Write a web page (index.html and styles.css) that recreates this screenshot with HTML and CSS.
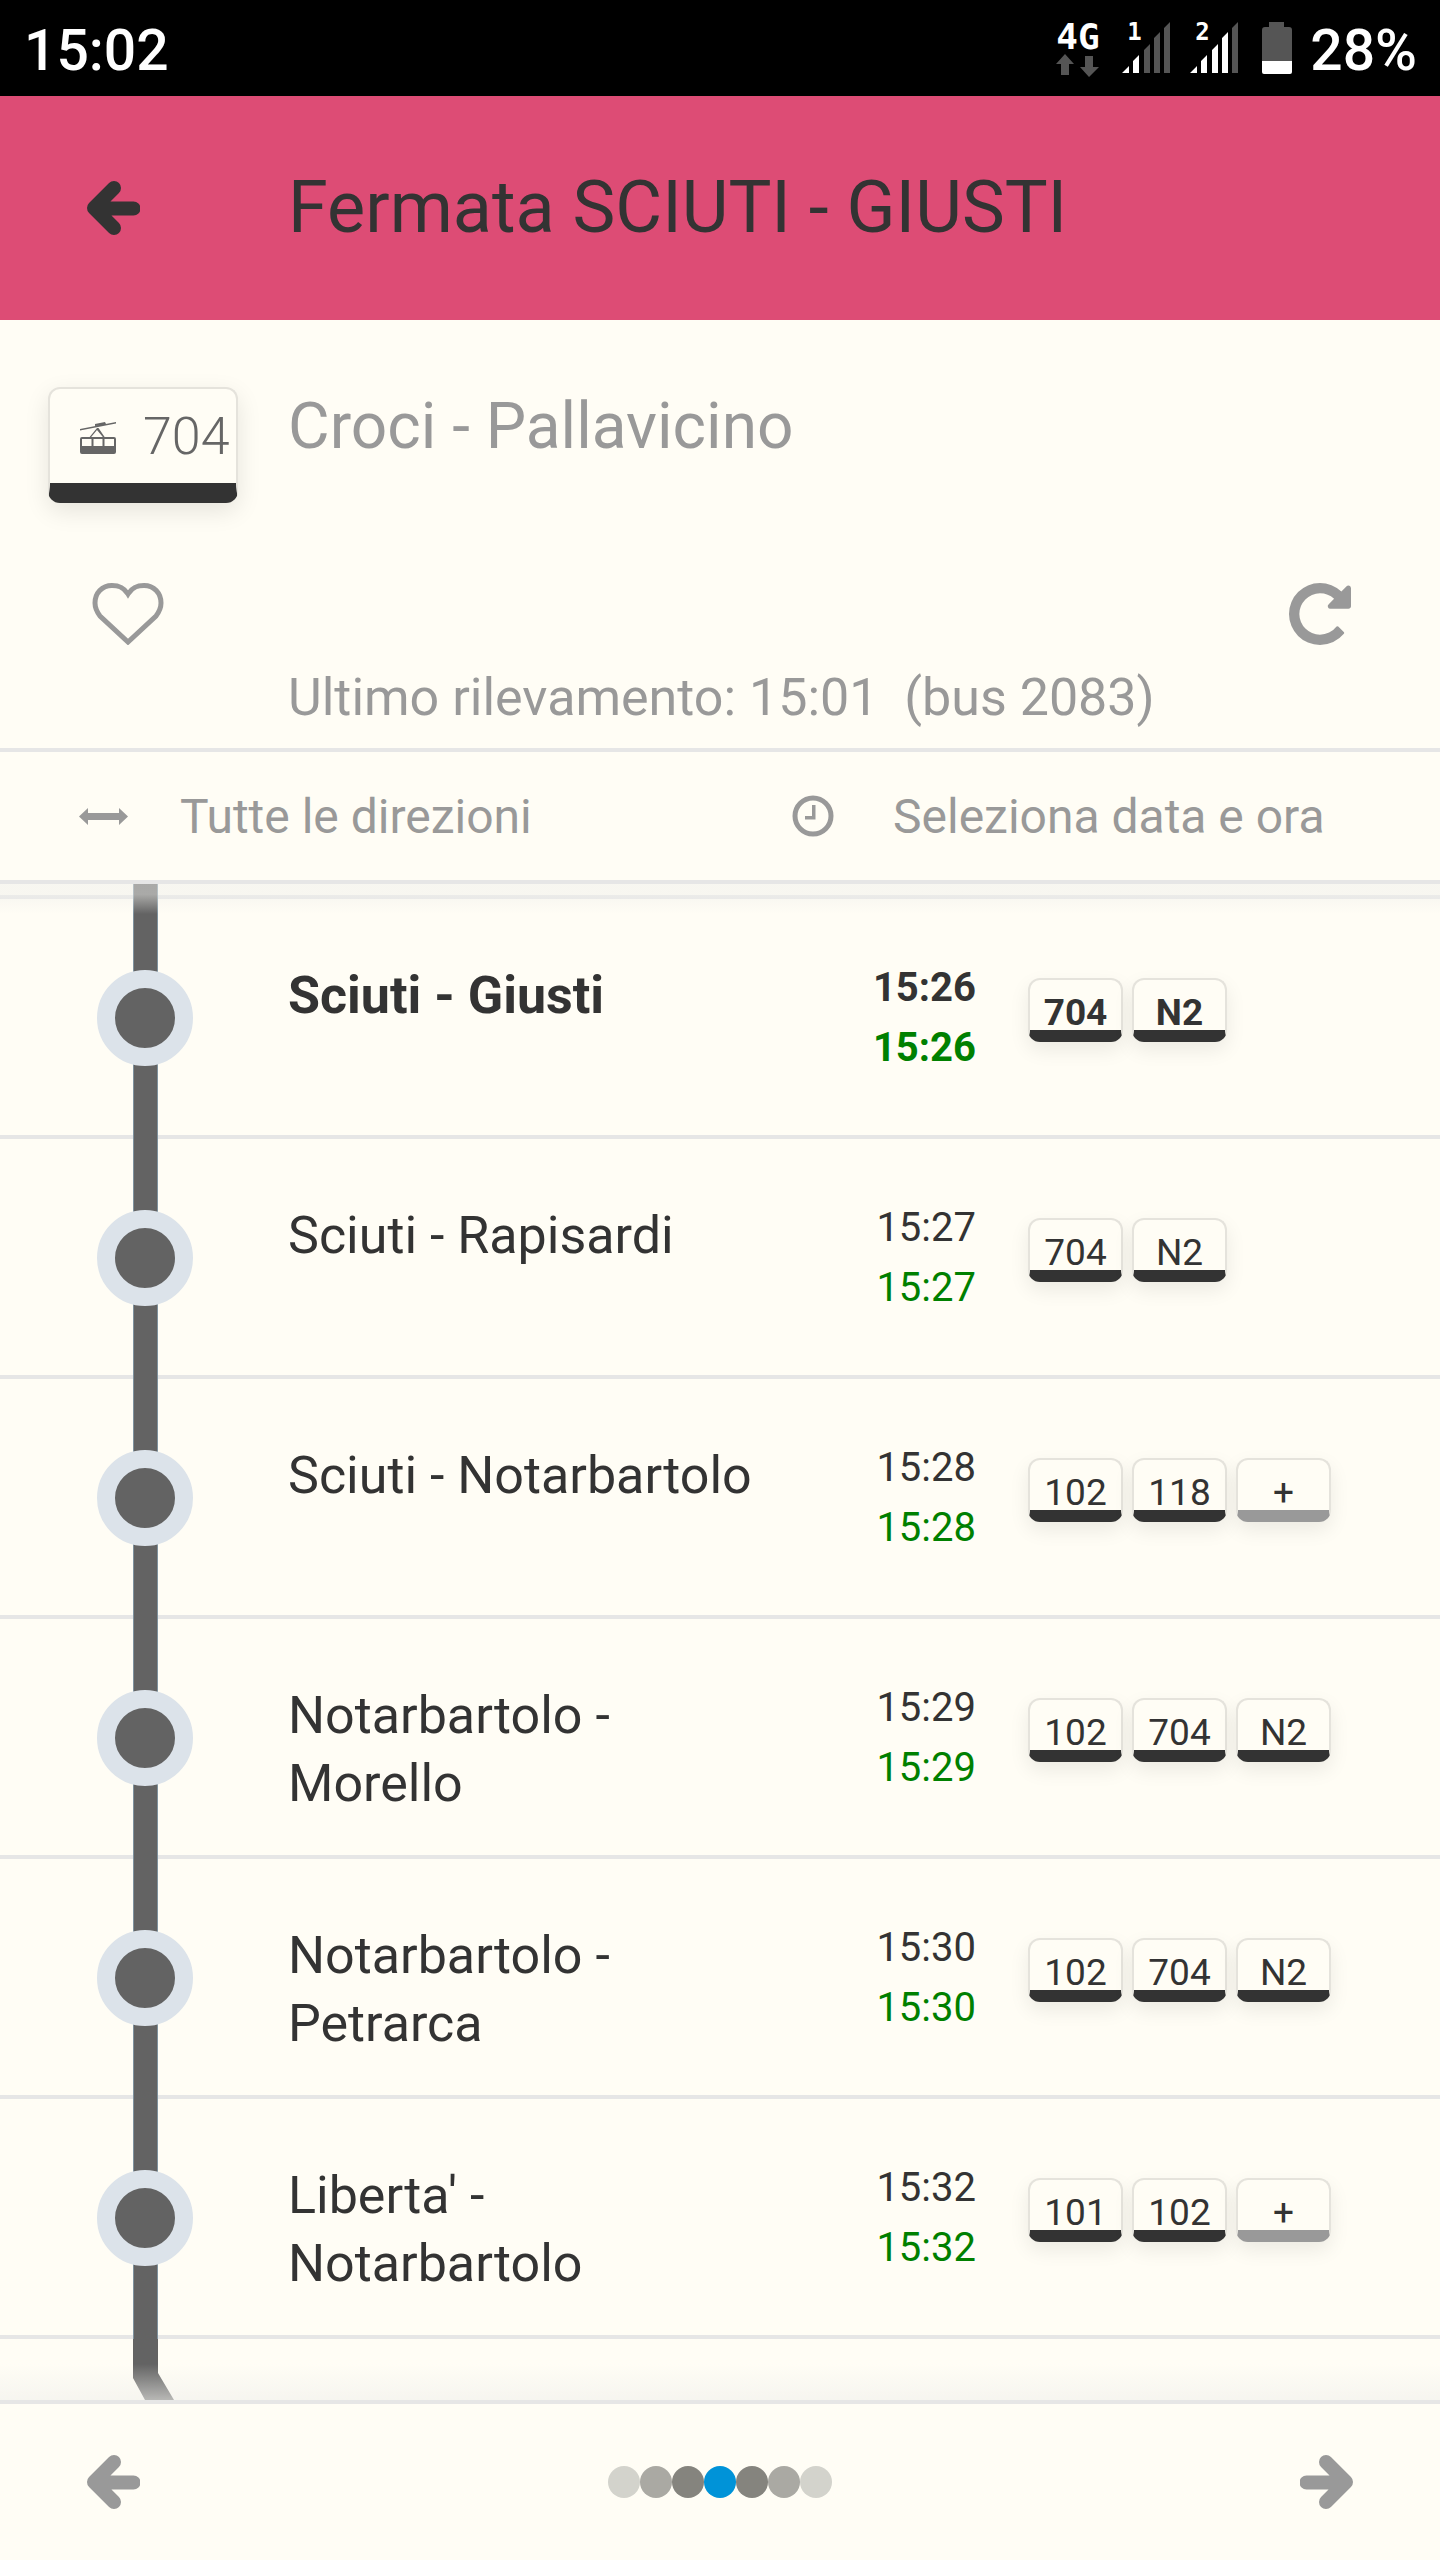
FILE: index.html
```html
<!DOCTYPE html>
<html lang="it">
<head>
    <meta charset="UTF-8">
    <meta name="viewport" content="width=device-width, initial-scale=1.0">
    <title>Fermata SCIUTI - GIUSTI</title>
    <link rel="stylesheet" href="styles.css">
</head>
<body>
<div class="app">
    <div class="statusbar">
        <span class="clock">15:02</span>
        <div class="status-icons">
            <div class="net">
                <span class="net-label">4G</span>
                <svg class="net-arrows" width="43" height="24" viewBox="0 0 43 24"><path d="M9 0l9 10h-5v11H5V10H0zM29 2h8v11h6l-10 10-9-10h5z" fill="#555"/></svg>
            </div>
            <div class="sim">
                <span class="sim-num">1</span>
                <svg width="48" height="51" viewBox="0 0 48 51"><path d="M0 51l7-7v7zM11 51V39l6-6v18z" fill="#fff"/><path d="M22 51V28l6-6v29zM32 51V16l6-6v41zM42 51V6l6-6v51z" fill="#555"/></svg>
            </div>
            <div class="sim sim-last">
                <span class="sim-num">2</span>
                <svg width="48" height="51" viewBox="0 0 48 51"><path d="M0 51l7-7v7zM11 51V39l6-6v18zM22 51V28l6-6v29zM32 51V16l6-6v41z" fill="#fff"/><path d="M42 51V6l6-6v51z" fill="#555"/></svg>
            </div>
            <svg class="battery" width="30" height="52" viewBox="0 0 30 52"><path d="M7 0h15v5h5q3 0 3 3v31H0V8q0-3 3-3h4z" fill="#555"/><path d="M0 39h30v11q0 2-2 2H2q-2 0-2-2z" fill="#fff"/></svg>
            <span class="percent">28%</span>
        </div>
    </div>

    <header class="topbar">
        <svg class="arrow arrow-dark" width="54" height="56" viewBox="0 0 54 56"><path d="M28 8L8 28l20 20M14 28.500h33.500"/></svg>
        <h1>Fermata SCIUTI - GIUSTI</h1>
    </header>

    <section class="line-info">
        <div class="line-head">
            <div class="badge-big">
                <svg width="36" height="35" viewBox="0 0 36 35"><path d="M0 10L36 3v1.500L0 11.500zM15 5l10-2 1 2-11 2z" fill="#666"/><path d="M17 9L8 20h1.500L17 11l7.500 9H26L18.500 9z" fill="#666"/><path d="M2 18h32q2 0 2 2v13q0 2-2 2H2q-2 0-2-2V20q0-2 2-2zM2 20v7h9.500v-7zM13.500 20v7h9v-7zM24.500 20v7H34v-7z" fill="#666" fill-rule="evenodd"/></svg>
                <span>704</span>
            </div>
            <h2>Croci - Pallavicino</h2>
        </div>
        <div class="tools">
            <svg width="72" height="62" viewBox="0 0 72 62"><path d="M36 11C31 3 25 2.500 20 2.500 10 2.500 3 10 3 20c0 5 2 9 5 13l28 26 28-26c3-4 5-8 5-13 0-10-7-17.500-17-17.500C47 2.500 41 3 36 11z" fill="none" stroke="#999" stroke-width="5"/></svg>
            <svg width="62" height="62" viewBox="0 -1408 1536 1536"><path transform="scale(1,-1)" fill="#999" d="M1536 1280v-448q0 -26 -19 -45t-45 -19h-448q-42 0 -59 40q-17 39 14 69l138 138q-148 137 -349 137q-104 0 -198.500 -40.500t-163.500 -109.500t-109.500 -163.500t-40.500 -198.500t40.500 -198.500t109.500 -163.500t163.500 -109.500t198.500 -40.500q119 0 225 52t179 147q7 10 23 12q15 0 25 -9l137 -138q9 -8 9.500 -20.500t-7.500 -22.500q-109 -132 -264 -204.500t-327 -72.500q-156 0 -298 61t-245 164t-164 245t-61 298t61 298t164 245t245 164t298 61q147 0 284.500 -55.500t244.500 -156.500l130 129q29 31 70 14q39 -17 39 -59z"/></svg>
        </div>
        <p class="last-seen">Ultimo rilevamento: 15:01&nbsp; (bus 2083)</p>
    </section>

    <div class="filters">
        <div class="filter filter-dir">
            <svg width="49" height="17" viewBox="0 0 49 17"><path d="M0 8.500L9 0v5h31V0l9 8.500-9 8.500v-5H9v5z" fill="#999"/></svg>
            <span>Tutte le direzioni</span>
        </div>
        <div class="filter filter-time">
            <svg width="42" height="42" viewBox="0 0 42 42"><circle cx="21" cy="21" r="18" fill="none" stroke="#999" stroke-width="5"/><path d="M20 10h3.500v14.500H13V21h7z" fill="#999"/></svg>
            <span>Seleziona data e ora</span>
        </div>
    </div>

    <div class="stops">
        <div class="stops-top"><div class="track"></div></div>

        <div class="stop stop-current">
            <div class="track"><div class="dot"></div></div>
            <div class="stop-name">Sciuti - Giusti</div>
            <div class="times"><div>15:26</div><div class="realtime">15:26</div></div>
            <div class="lines">
                <span class="chip">704</span>
                <span class="chip">N2</span>
            </div>
        </div>
        <div class="stop">
            <div class="track"><div class="dot"></div></div>
            <div class="stop-name">Sciuti - Rapisardi</div>
            <div class="times"><div>15:27</div><div class="realtime">15:27</div></div>
            <div class="lines">
                <span class="chip">704</span>
                <span class="chip">N2</span>
            </div>
        </div>
        <div class="stop">
            <div class="track"><div class="dot"></div></div>
            <div class="stop-name">Sciuti - Notarbartolo</div>
            <div class="times"><div>15:28</div><div class="realtime">15:28</div></div>
            <div class="lines">
                <span class="chip">102</span>
                <span class="chip">118</span>
                <span class="chip chip-more">+</span>
            </div>
        </div>
        <div class="stop">
            <div class="track"><div class="dot"></div></div>
            <div class="stop-name">Notarbartolo - Morello</div>
            <div class="times"><div>15:29</div><div class="realtime">15:29</div></div>
            <div class="lines">
                <span class="chip">102</span>
                <span class="chip">704</span>
                <span class="chip">N2</span>
            </div>
        </div>
        <div class="stop">
            <div class="track"><div class="dot"></div></div>
            <div class="stop-name">Notarbartolo - Petrarca</div>
            <div class="times"><div>15:30</div><div class="realtime">15:30</div></div>
            <div class="lines">
                <span class="chip">102</span>
                <span class="chip">704</span>
                <span class="chip">N2</span>
            </div>
        </div>
        <div class="stop">
            <div class="track"><div class="dot"></div></div>
            <div class="stop-name">Liberta' - Notarbartolo</div>
            <div class="times"><div>15:32</div><div class="realtime">15:32</div></div>
            <div class="lines">
                <span class="chip">101</span>
                <span class="chip">102</span>
                <span class="chip chip-more">+</span>
            </div>
        </div>

        <svg class="track-end" width="41" height="61" viewBox="0 0 41 61"><path d="M0 0h25v34l16 27H12L0 39z" fill="#636363"/></svg>
    </div>

    <footer class="pager">
        <svg class="arrow" width="54" height="56" viewBox="0 0 54 56"><path d="M28 8L8 28l20 20M14 28.500h33.500"/></svg>
        <div class="dots">
            <i class="d1"></i><i class="d2"></i><i class="d3"></i><i class="on"></i><i class="d3"></i><i class="d2"></i><i class="d1"></i>
        </div>
        <svg class="arrow" width="54" height="56" viewBox="0 0 54 56"><path d="M26 8l20 20-20 20M40 28.500H6.500"/></svg>
    </footer>
</div>
</body>
</html>
```

FILE: styles.css
```css
* {
    box-sizing: border-box;
}
body {
    margin: 0;
    padding: 0;
    font-family: Roboto, "Liberation Sans", sans-serif;
    background: #fffdf5;
    color: #333;
}
h1, h2, p {
    margin: 0;
    font-weight: 400;
}
.app {
    width: 1440px;
    height: 2560px;
    display: flex;
    flex-direction: column;
    overflow: hidden;
}
.arrow path {
    fill: none;
    stroke: #999;
    stroke-width: 14;
    stroke-linecap: round;
    stroke-linejoin: round;
}
.arrow-dark path {
    stroke: #333;
}

/* status bar */
.statusbar {
    height: 96px;
    flex: none;
    background: #000;
    color: #fff;
    display: flex;
    justify-content: space-between;
    padding: 22px 23px 0 24px;
}
.clock {
    font-size: 57px;
    line-height: 58px;
    font-weight: 500;
}
.status-icons {
    display: flex;
    align-items: flex-start;
}
.net {
    width: 43px;
    display: flex;
    flex-direction: column;
    margin-right: 23px;
}
.net-label {
    font-family: "DejaVu Sans Mono", monospace;
    font-size: 36px;
    line-height: 30px;
    font-weight: 700;
    white-space: nowrap;
}
.net-arrows {
    margin-top: 2px;
}
.sim {
    position: relative;
    margin-right: 20px;
    height: 52px;
}
.sim-last {
    margin-right: 24px;
}
.sim-num {
    position: absolute;
    left: 5px;
    top: -2px;
    font-family: "DejaVu Sans Mono", monospace;
    font-size: 24px;
    line-height: 24px;
    font-weight: 700;
}
.percent {
    font-size: 57px;
    line-height: 58px;
    margin-left: 18px;
    font-weight: 500;
}

/* header */
.topbar {
    height: 224px;
    flex: none;
    background: #dd4c75;
    display: flex;
    align-items: center;
    padding-left: 86px;
}
.topbar h1 {
    font-size: 72px;
    margin-left: 148px;
    margin-top: -2px;
    color: #333;
}

/* line info */
.line-info {
    height: 432px;
    flex: none;
    border-bottom: 4px solid #e6e6e6;
}
.line-head {
    display: flex;
    padding: 67px 0 0 48px;
}
.badge-big {
    width: 190px;
    height: 116px;
    background: #fffdf5;
    border: 2px solid #e5e3dc;
    border-bottom: 20px solid #333;
    border-radius: 12px;
    box-shadow: 0 8px 24px rgba(0, 0, 0, 0.1);
    display: flex;
    align-items: center;
    padding-left: 30px;
    color: #666;
    font-size: 52px;
    font-weight: 300;
}
.badge-big span {
    margin-left: 27px;
}
.line-head h2 {
    font-size: 64px;
    line-height: 72px;
    color: #999;
    margin: 4px 0 0 50px;
}
.tools {
    display: flex;
    justify-content: space-between;
    padding: 80px 89px 0 92px;
}
.last-seen {
    font-size: 52px;
    line-height: 60px;
    color: #999;
    padding-left: 288px;
    margin-top: 23px;
}

/* filters */
.filters {
    height: 132px;
    flex: none;
    border-bottom: 4px solid #e6e6e6;
    display: flex;
    align-items: center;
    color: #999;
    font-size: 48px;
}
.filter {
    display: flex;
    align-items: center;
}
.filter-dir {
    width: 792px;
    padding-left: 79px;
}
.filter-dir span {
    margin-left: 52px;
}
.filter-time span {
    margin-left: 59px;
}

/* stops list */
.stops {
    flex: 1;
    position: relative;
    overflow: hidden;
}
.stops::before, .stops::after {
    content: "";
    position: absolute;
    left: 0;
    right: 0;
    z-index: 2;
    pointer-events: none;
}
.stops::before {
    top: 0;
    height: 30px;
    background: linear-gradient(rgba(240, 240, 236, 0.5) 35%, rgba(240, 240, 236, 0));
}
.stops::after {
    bottom: 0;
    height: 36px;
    background: linear-gradient(rgba(240, 240, 236, 0), rgba(240, 240, 236, 0.6));
}
.stops-top {
    height: 15px;
    border-bottom: 4px solid #e6e6e6;
    padding-left: 97px;
    display: flex;
}
.stops-top .track {
    height: 15px;
}
.stop {
    height: 240px;
    border-bottom: 4px solid #e6e6e6;
    padding-left: 97px;
    display: flex;
    align-items: flex-start;
    font-size: 52px;
}
.track {
    width: 96px;
    height: 240px;
    flex: none;
    background: linear-gradient(90deg, #7f929e 1px, #636363 1px, #636363 24px, #7f929e 24px) center / 25px 100% no-repeat;
    display: flex;
    align-items: center;
}
.dot {
    width: 96px;
    height: 96px;
    margin-top: -3px;
    border-radius: 50%;
    background: #636363;
    border: 18px solid #dce3ea;
}
.stop-name {
    width: 536px;
    margin-left: 95px;
    padding: 63px 50px 0 0;
    line-height: 68px;
}
.times {
    width: 152px;
    padding-top: 59px;
    font-size: 40px;
    line-height: 60px;
    text-align: right;
}
.realtime {
    color: #008000;
}
.lines {
    display: flex;
    gap: 9px;
    margin-left: 52px;
    margin-top: 79px;
}
.chip {
    width: 95px;
    height: 64px;
    background: #fffdf5;
    border: 2px solid #e5e3dc;
    border-bottom: 12px solid #333;
    border-radius: 12px;
    box-shadow: 0 8px 20px rgba(0, 0, 0, 0.08);
    text-align: center;
    font-size: 37px;
    line-height: 66px;
}
.chip-more {
    border-bottom-color: #999;
}
.stop-current .stop-name,
.stop-current .times,
.stop-current .chip {
    font-weight: 700;
}
.track-end {
    display: block;
    margin-left: 133px;
}

/* pager */
.pager {
    height: 160px;
    flex: none;
    border-top: 4px solid #e6e6e6;
    display: flex;
    align-items: center;
    justify-content: space-between;
    padding: 0 86px;
}
.dots {
    display: flex;
}
.dots i {
    width: 32px;
    height: 32px;
    border-radius: 50%;
    display: block;
}
.dots .d1 {
    background: #d3d3cc;
}
.dots .d2 {
    background: #aaa9a3;
}
.dots .d3 {
    background: #85847e;
}
.dots .on {
    background: #0093d8;
}
```
